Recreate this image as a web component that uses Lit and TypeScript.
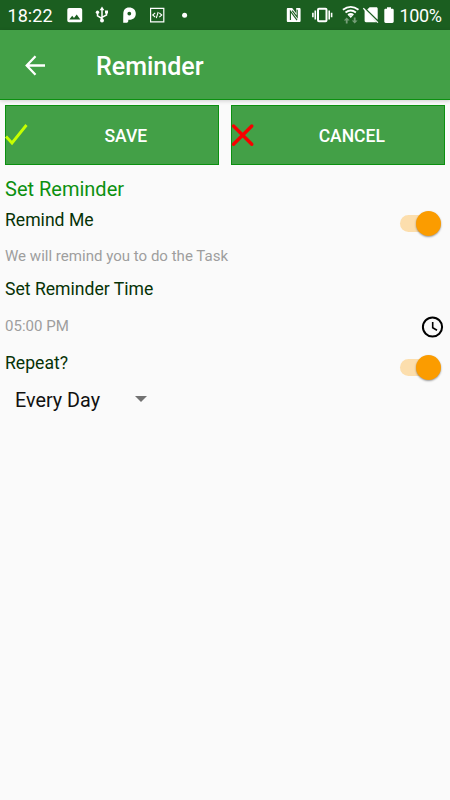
import { LitElement, html, css } from "lit";
import { customElement, property } from "lit/decorators.js";

@customElement("status-bar")
class StatusBar extends LitElement {
  static styles = css`
    :host { display: block; height: 30px; background: #1b5e20; color: #fff; }
    svg { display: block; width: 450px; height: 30px; }
    text { font: 400 18px Roboto, sans-serif; fill: #fff; }
    .faint { opacity: 0.4; }
  `;
  render() {
    return html`<svg viewBox="0 0 450 30" fill="#fff">
      <text x="7.5" y="22" textLength="45">18:22</text>
      <path fill-rule="evenodd" d="M69 8h11.500a1.700 1.700 0 0 1 1.700 1.700v10.800a1.700 1.700 0 0 1-1.700 1.700H69a1.700 1.700 0 0 1-1.700-1.700V9.700A1.700 1.700 0 0 1 69 8zM69.300 19.500h11l-3.600-4.900-2.700 3.400-1.800-2.200z"/>
      <g fill="none" stroke="#fff" stroke-width="1.500">
        <path d="M102 9v11M102 18.500l-4.500-2.700v-3.300M102 17.300l4.500-2.300v-3"/>
      </g>
      <path d="M99.600 10.200L102 6.600l2.400 3.600zM105 10.500h3v3h-3z"/>
      <circle cx="97.500" cy="12.200" r="1.700"/><circle cx="102" cy="20.500" r="2"/>
      <path fill-rule="evenodd" d="M129 7.500c4.300 0 6.800 2.500 6.800 6.200s-2.600 6-6.200 6h-1.300v1c0 1.400-.8 2.100-2.200 2.100H123.200v-3l.1-6c.1-3.900 2-6.300 5.700-6.300zM129.300 11.700a1.900 1.900 0 1 0 0 3.800 1.900 1.900 0 0 0 0-3.800z"/>
      <path fill="none" stroke="#fff" stroke-width="1.200" d="M150.600 8.300h13.200v13.600h-13.200z"/>
      <path fill="none" stroke="#fff" stroke-width="1.100" d="M155.200 12.800L152.700 15l2.500 2.200M159.300 12.800l2.500 2.200-2.500 2.200M158.200 12l-1.900 6.200"/>
      <circle cx="184.600" cy="15.200" r="2.500"/>
      <path d="M288 8h4.200l4 5.200V8h3.200c.8 0 1.200.4 1.200 1.200v11.600c0 .8-.4 1.200-1.200 1.200h-11.400c-.8 0-1.200-.4-1.200-1.200V9.200c0-.8.4-1.200 1.200-1.200z"/>
      <path fill="none" stroke="#1b5e20" stroke-width="1.100" d="M290.400 20v-8.800l6.600 9M297.200 9.800v7.400l-5-6.600"/>
      <g fill="none" stroke="#fff">
        <rect x="318" y="8.800" width="8.500" height="12.400" rx="1" stroke-width="2"/>
        <path stroke-width="1.600" d="M315.300 10.500v9M312.900 12.700v4.600M329.200 10.500v9M331.600 12.700v4.600"/>
        <path stroke-width="1.800" d="M342.900 9.800q7.800-6 15.600 0M345.500 12.500q5.200-4 10.400 0M348 15q2.700-2 5.400 0"/>
      </g>
      <path d="M348.200 15.300h5l-2.500 2.700z"/>
      <path class="faint" d="M346.700 17.500l2.900 3h-2v3h-1.800v-3h-2zM354.700 23.500l-2.900-3h2v-3h1.800v3h2z"/>
      <path d="M369.600 7.300h6.700c.8 0 1.400.6 1.400 1.400v11L367.200 9.500zM364.600 9.500l12 12.700H366c-.8 0-1.400-.6-1.400-1.400z"/>
      <path stroke="#fff" stroke-width="1.300" d="M363.300 8.300l14.600 14.300"/>
      <path d="M387 7.200h4v1.600h1.300c.8 0 1.400.5 1.400 1.300v11.500c0 .8-.6 1.400-1.400 1.400h-6.600c-.8 0-1.400-.6-1.400-1.400V10.100c0-.8.6-1.300 1.400-1.300h1.300z"/>
      <text x="399.5" y="22" textLength="42.500">100%</text>
    </svg>`;
  }
}

@customElement("toggle-switch")
class ToggleSwitch extends LitElement {
  static styles = css`
    :host { display: flex; align-items: center; width: 45px; height: 26px; }
    .track { width: 36px; height: 17px; border-radius: 9px; background: #fcdead; display: flex; align-items: center; justify-content: flex-end; }
    .thumb { flex: none; width: 25px; height: 25px; margin-right: -5px; border-radius: 50%; background: #fb9c00; box-shadow: 0 1px 2px rgba(0, 0, 0, 0.4); }
  `;
  render() {
    return html`<div class="track"><div class="thumb"></div></div>`;
  }
}

@customElement("action-button")
class ActionButton extends LitElement {
  @property() label = "";
  @property() kind = "save";
  static styles = css`
    :host { display: flex; box-sizing: border-box; height: 60px; border: 1px solid #0b900f; background: #43a047; align-items: center; }
    svg { width: 24px; height: 24px; flex: none; margin-left: -1px; }
    .label { flex: 1; text-align: center; color: #fff; font: 500 17.500px/24px Roboto, sans-serif; padding: 2px 0 0 4.500px; }
  `;
  render() {
    const mark = this.kind === "save"
      ? html`<svg viewBox="0 0 24 24" fill="none" stroke="#c6ff00" stroke-width="2.800"><path d="M1 13.500l6 6.500L21.500 2"/></svg>`
      : html`<svg viewBox="0 0 24 24" fill="none" stroke="#f80000" stroke-width="3.400"><path stroke-linecap="round" d="M2.500 3l18.300 18.300M20.800 3L2.500 21.300"/></svg>`;
    return html`${mark}<span class="label">${this.label}</span>`;
  }
}

@customElement("app-root")
class AppRoot extends LitElement {
  static styles = css`
    :host { display: block; height: 800px; background: #fafafa; font-family: Roboto, sans-serif; overflow: hidden; }
    .toolbar { box-sizing: border-box; height: 70px; background: #43a047; border-bottom: 1px solid #0b900f; box-shadow: 0 1px 4px rgba(0, 0, 0, 0.18); display: flex; align-items: center; padding-left: 25px; gap: 50px; }
    .toolbar svg { width: 21px; height: 21px; margin-top: 1px; }
    .title { color: #fff; font-size: 25px; font-weight: 500; line-height: 30px; padding-top: 5px; }
    .actions { display: grid; grid-template-columns: 214px 214px; gap: 12px; padding: 5px 5px 0; }
    .form { padding: 12px 5px 0; }
    .row { display: flex; justify-content: space-between; }
    .heading { color: #0c9010; font-size: 20px; line-height: 24px; }
    .label { color: #063206; font-size: 17.600px; }
    .note { color: #9e9e9e; font-size: 15.050px; }
    .r1 { line-height: 39px; height: 37px; }
    .r1 toggle-switch { margin-top: 9px; }
    .r2 { line-height: 37px; }
    .r3 { line-height: 28px; }
    .r4 { line-height: 47px; height: 45px; }
    .r4 svg { width: 24px; height: 24px; margin-top: 12px; }
    .r5 { line-height: 30px; height: 30px; }
    .r5 toggle-switch { margin-top: 6px; }
    .spinner { display: flex; align-items: center; height: 44px; width: 142px; box-sizing: border-box; padding-left: 10px; justify-content: space-between; color: #111; font-size: 19.800px; }
    .spinner svg { width: 12px; height: 6px; margin-top: -2px; }
  `;
  render() {
    return html`
      <status-bar></status-bar>
      <div class="toolbar">
        <svg viewBox="0 0 21 21" fill="none" stroke="#fff" stroke-width="2.300"><path d="M20 10.500H2M10.500 1.300L1.700 10.500l8.800 9.200"/></svg>
        <div class="title">Reminder</div>
      </div>
      <div class="actions">
        <action-button label="SAVE" kind="save"></action-button>
        <action-button label="CANCEL" kind="cancel"></action-button>
      </div>
      <div class="form">
        <div class="heading">Set Reminder</div>
        <div class="row r1"><span class="label">Remind Me</span><toggle-switch></toggle-switch></div>
        <div class="note r2">We will remind you to do the Task</div>
        <div class="label r3">Set Reminder Time</div>
        <div class="row r4"><span class="note">05:00 PM</span>
          <svg viewBox="0 0 24 24" fill="none" stroke="#000"><circle cx="11.500" cy="12" r="9.600" stroke-width="2"/><path stroke-width="1.600" d="M11.700 7v5.700l4.300 2.500"/></svg>
        </div>
        <div class="row r5"><span class="label">Repeat?</span><toggle-switch></toggle-switch></div>
        <div class="spinner"><span>Every Day</span><svg viewBox="0 0 12 6" fill="#727272"><path d="M0 0h12L6 6z"/></svg></div>
      </div>`;
  }
}
